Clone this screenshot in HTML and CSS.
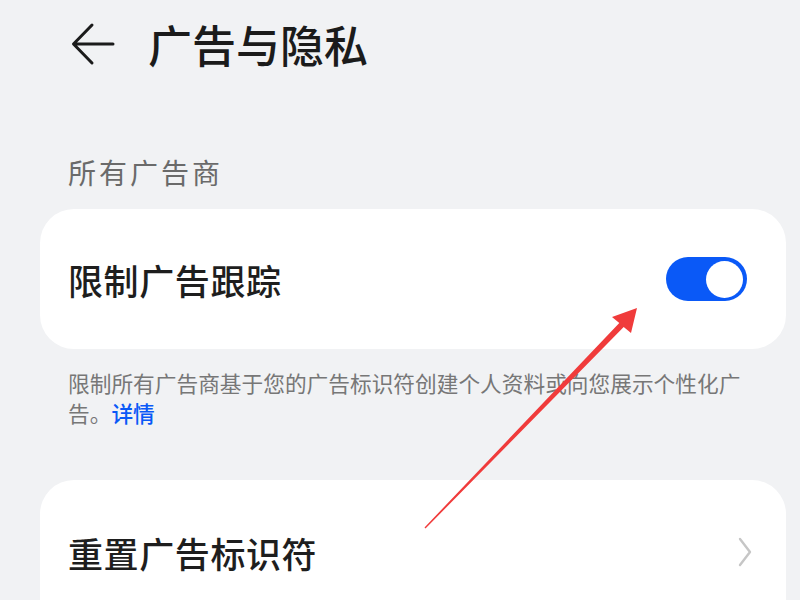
FILE: index.html
```html
<!DOCTYPE html>
<html lang="zh-CN">
<head>
<meta charset="utf-8">
<title>广告与隐私</title>
<link rel="stylesheet" href="styles.css">
</head>
<body>
<div class="page">
  <header class="header">
    <svg class="back" width="44" height="44" viewBox="0 0 44 44" aria-hidden="true">
      <path d="M3 22 H42 M21 3 L2.5 22 L21 41" fill="none" stroke="#1b1b1b" stroke-width="3" stroke-linecap="round" stroke-linejoin="round"/>
    </svg>
    <h1 class="title">广告与隐私</h1>
  </header>

  <div class="section-label">所有广告商</div>

  <div class="card">
    <div class="row">
      <span class="row-text">限制广告跟踪</span>
      <span class="toggle"><span class="knob"></span></span>
    </div>
  </div>

  <p class="desc">限制所有广告商基于您的广告标识符创建个人资料或向您展示个性化广告。<a class="link">详情</a></p>

  <div class="card card-second">
    <div class="row row-tall">
      <span class="row-text">重置广告标识符</span>
      <svg class="chevron" width="14" height="30" viewBox="0 0 14 30" aria-hidden="true">
        <path d="M2 2 L12 15 L2 28" fill="none" stroke="#c6c6c6" stroke-width="2.4" stroke-linecap="round" stroke-linejoin="round"/>
      </svg>
    </div>
  </div>

  <svg class="annotation" width="800" height="600" viewBox="0 0 800 600" aria-hidden="true">
    <polygon points="424.5,527.5 619.3,322.9 612,317 637,308 631,333 623.7,327.1 425.5,528.5" fill="#f03b3b"/>
  </svg>
</div>
</body>
</html>
```

FILE: styles.css
```css
html, body {
  margin: 0;
  padding: 0;
  background: #f1f2f4;
}

body {
  font-family: "Noto Sans CJK SC", "Noto Sans", sans-serif;
  width: 800px;
  height: 600px;
  overflow: hidden;
}

.page {
  position: relative;
  width: 800px;
  height: 600px;
}

.header {
  height: 88px;
  display: flex;
  align-items: center;
  padding-left: 71px;
  gap: 33px;
}

.back {
  display: block;
  flex: none;
}

.title {
  margin: 0;
  font-size: 44px;
  line-height: 88px;
  font-weight: 500;
  color: #1b1b1b;
}

.section-label {
  margin: 64px 0 0 68px;
  font-size: 28px;
  letter-spacing: 3px;
  line-height: 40px;
  color: #6a6a6a;
}

.card {
  margin: 17px 14px 0 40px;
  background: #ffffff;
  border-radius: 34px;
}

.row {
  height: 140px;
  display: flex;
  align-items: center;
  justify-content: space-between;
  padding: 0 39px 0 28px;
}

.row-tall {
  height: 144px;
  padding-right: 34px;
}

.row-text {
  font-size: 35px;
  letter-spacing: 0.6px;
  font-weight: 500;
  color: #1e1e1e;
}

.toggle {
  position: relative;
  width: 81px;
  height: 44px;
  border-radius: 22px;
  background: #0a59f7;
  flex: none;
}

.knob {
  position: absolute;
  right: 4px;
  top: 3.5px;
  width: 37px;
  height: 37px;
  border-radius: 50%;
  background: #ffffff;
}

.desc {
  margin: 19px 40px 0 68px;
  font-size: 21.7px;
  line-height: 30px;
  color: #777777;
}

.link {
  color: #0a59f7;
  font-weight: 500;
}

.card-second {
  margin-top: 52px;
  border-radius: 34px 34px 0 0;
}

.chevron {
  display: block;
  flex: none;
}

.annotation {
  position: absolute;
  left: 0;
  top: 0;
  pointer-events: none;
}
```
